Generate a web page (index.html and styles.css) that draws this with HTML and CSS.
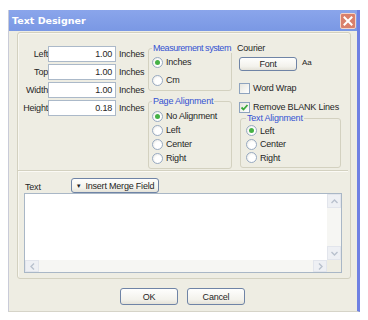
FILE: index.html
```html
<!DOCTYPE html>
<html>
<head>
<meta charset="utf-8">
<link rel="stylesheet" href="styles.css">
</head>
<body>
<div class="window">
  <div class="titlebar">
    <span class="title">Text Designer</span>
    <span class="close"><svg width="10" height="10" viewBox="0 0 10 10"><path d="M1.5 1.5 L8.5 8.5 M8.5 1.5 L1.5 8.5" stroke="#fff" stroke-width="2" stroke-linecap="square"/></svg></span>
  </div>
  <div class="client">
    <div class="panel">
      <div class="top">
        <div class="fields">
          <div class="row"><span class="lbl">Left</span><span class="input">1.00</span><span class="unit">Inches</span></div>
          <div class="row"><span class="lbl">Top</span><span class="input">1.00</span><span class="unit">Inches</span></div>
          <div class="row"><span class="lbl">Width</span><span class="input">1.00</span><span class="unit">Inches</span></div>
          <div class="row"><span class="lbl">Height</span><span class="input">0.18</span><span class="unit">Inches</span></div>
        </div>
        <div class="groups">
          <fieldset class="grp meas">
            <legend>Measurement system</legend>
            <div class="opt"><span class="radio on"></span>Inches</div>
            <div class="opt"><span class="radio"></span>Cm</div>
          </fieldset>
          <fieldset class="grp page">
            <legend>Page Alignment</legend>
            <div class="opt"><span class="radio on"></span>No Alignment</div>
            <div class="opt"><span class="radio"></span>Left</div>
            <div class="opt"><span class="radio"></span>Center</div>
            <div class="opt"><span class="radio"></span>Right</div>
          </fieldset>
        </div>
        <div class="right">
          <div class="courier">Courier</div>
          <div class="fontrow"><span class="btn fontbtn">Font</span><span class="aa">Aa</span></div>
          <div class="chk first"><span class="box"></span>Word Wrap</div>
          <div class="chk second"><span class="box"><svg width="9" height="9" viewBox="0 0 9 9"><path d="M1.5 4.5 L3.5 6.5 L7.5 2" fill="none" stroke="#3aa93a" stroke-width="1.8"/></svg></span>Remove BLANK Lines</div>
          <fieldset class="grp talign">
            <legend>Text Alignment</legend>
            <div class="opt"><span class="radio on"></span>Left</div>
            <div class="opt"><span class="radio"></span>Center</div>
            <div class="opt"><span class="radio"></span>Right</div>
          </fieldset>
        </div>
      </div>
      <div class="sep"></div>
      <div class="bottom">
        <div class="textbar">
          <span class="tlabel">Text</span>
          <span class="btn merge"><span class="tri">&#9660;</span>Insert Merge Field</span>
        </div>
        <div class="textarea">
          <div class="content"></div>
          <div class="vscroll">
            <span class="sbtn"><svg width="7" height="5" viewBox="0 0 7 5"><path d="M0.5 4 L3.5 1 L6.5 4" fill="none" stroke="#b9c1cd" stroke-width="1.4"/></svg></span>
            <span class="sbtn"><svg width="7" height="5" viewBox="0 0 7 5"><path d="M0.5 1 L3.5 4 L6.5 1" fill="none" stroke="#b9c1cd" stroke-width="1.4"/></svg></span>
          </div>
          <div class="hscroll">
            <span class="sbtn"><svg width="5" height="7" viewBox="0 0 5 7"><path d="M4 0.5 L1 3.5 L4 6.5" fill="none" stroke="#b9c1cd" stroke-width="1.4"/></svg></span>
            <span class="sbtn"><svg width="5" height="7" viewBox="0 0 5 7"><path d="M1 0.5 L4 3.5 L1 6.5" fill="none" stroke="#b9c1cd" stroke-width="1.4"/></svg></span>
          </div>
          <div class="corner"></div>
        </div>
      </div>
    </div>
    <div class="actions">
      <span class="btn action">OK</span>
      <span class="btn action">Cancel</span>
    </div>
  </div>
</div>
</body>
</html>
```
FILE: styles.css
```css
* { box-sizing: border-box; }
html, body { margin: 0; padding: 0; background: #ffffff; }
body {
  font-family: "Liberation Sans", Arial, sans-serif;
  font-size: 9px;
  letter-spacing: -0.2px;
  color: #262626;
}
.window {
  margin: 10px 0 0 8px;
  width: 352px;
  height: 302px;
  background: #eeede3;
  border-left: 1px solid #c9cbd8;
  border-right: 3px solid #6f81e2;
  border-bottom: 1px solid #d6d4c8;
  display: flex;
  flex-direction: column;
}
.titlebar {
  height: 21px;
  background: linear-gradient(#8aa5eb, #7a98e4);
  display: flex;
  align-items: center;
  justify-content: space-between;
  padding: 0 1px 0 3px;
}
.title {
  color: #ffffff;
  font-weight: bold;
  letter-spacing: 0;
  font-family: "DejaVu Sans", "Liberation Sans", sans-serif;
  font-size: 9.5px;
}
.close {
  width: 16px;
  height: 16px;
  background: #d9806c;
  border: 1px solid #f3d3c9;
  border-radius: 2px;
  display: flex;
  align-items: center;
  justify-content: center;
}
.client {
  flex: 1;
  padding: 1px 7px 0 8px;
  display: flex;
  flex-direction: column;
}
.panel {
  width: 334px;
  height: 247px;
  border: 1px solid #d3d1c0;
  border-radius: 3px;
  box-shadow: inset 1px 1px 0 #f8f7f1;
  display: flex;
  flex-direction: column;
}
.top {
  height: 137px;
  display: flex;
}
.fields {
  width: 130px;
  padding-top: 13px;
  display: flex;
  flex-direction: column;
  gap: 2px;
}
.row {
  height: 16px;
  display: flex;
  align-items: center;
}
.lbl {
  width: 30px;
  text-align: right;
}
.input {
  width: 68px;
  height: 16px;
  background: #ffffff;
  border: 1px solid #abb9c9;
  text-align: right;
  padding-right: 3px;
  line-height: 14px;
}
.unit {
  margin-left: 3px;
}
.groups {
  width: 84px;
  display: flex;
  flex-direction: column;
}
.grp {
  margin: 0;
  border: 1px solid #d3d1c0;
  border-radius: 3px;
  padding: 0 0 2px 3px;
  min-width: 0;
}
.grp legend {
  padding: 0 1px;
  color: #3452d2;
  line-height: 10px;
  height: 10px;
  white-space: nowrap;
}
.meas legend {
  letter-spacing: -0.45px;
}
.opt {
  height: 14px;
  display: flex;
  align-items: center;
  gap: 3px;
}
.radio {
  width: 11px;
  height: 11px;
  border-radius: 50%;
  border: 1px solid #98aac2;
  background: radial-gradient(circle at 60% 60%, #ffffff 40%, #e4e3dc 100%);
  display: flex;
  align-items: center;
  justify-content: center;
}
.radio.on::after {
  content: "";
  width: 5px;
  height: 5px;
  border-radius: 50%;
  background: #45b145;
}
.meas {
  margin-top: 10px;
  height: 48px;
  padding-top: 2px;
}
.meas .opt + .opt { margin-top: 4px; }
.page {
  margin-top: 5px;
  height: 73px;
  padding-top: 3px;
}
.right {
  margin-left: 5px;
  width: 104px;
  display: flex;
  flex-direction: column;
}
.courier {
  margin-top: 10px;
  line-height: 10px;
}
.fontrow {
  margin-top: 4px;
  display: flex;
  align-items: flex-start;
}
.btn {
  display: flex;
  align-items: center;
  justify-content: center;
  border: 1px solid #6f84a6;
  border-radius: 3px;
  background: linear-gradient(#fefefd, #f3f2ec 70%, #e4e2d8);
  color: #1f1f1f;
}
.fontbtn {
  margin-left: 2px;
  width: 58px;
  height: 14px;
}
.aa {
  margin-left: 5px;
  margin-top: 1px;
  font-size: 8px;
  letter-spacing: 0;
}
.chk {
  height: 12px;
  display: flex;
  align-items: center;
  gap: 3px;
  margin-left: 2px;
}
.chk.first { margin-top: 11px; }
.chk.second { margin-top: 7px; }
.box {
  width: 11px;
  height: 11px;
  border: 1px solid #8ea3be;
  background: linear-gradient(135deg, #e6e5de, #ffffff);
  display: flex;
  align-items: center;
  justify-content: center;
}
.talign {
  margin-left: 3px;
  width: 101px;
  height: 55px;
  padding: 1px 0 2px 5px;
}
.talign .opt { height: 13.5px; }
.sep {
  height: 2px;
  border-top: 1px solid #d3d1c0;
  border-bottom: 1px solid #fbfaf5;
  margin-right: 2px;
}
.bottom {
  flex: 1;
  padding: 6px 0 0 6px;
  display: flex;
  flex-direction: column;
}
.textbar {
  height: 15px;
  display: flex;
  align-items: center;
}
.tlabel {
  width: 47px;
  padding-left: 1px;
  margin-top: 2px;
}
.merge {
  width: 88px;
  height: 15px;
  gap: 4px;
}
.tri {
  font-size: 6px;
}
.textarea {
  width: 318px;
  height: 80px;
  border: 1px solid #a9b7c6;
  background: #ffffff;
  display: grid;
  grid-template-columns: 1fr 14px;
  grid-template-rows: 1fr 12px;
}
.vscroll {
  background: #f6f6f3;
  display: flex;
  flex-direction: column;
  justify-content: space-between;
}
.vscroll .sbtn { width: 14px; height: 14px; }
.hscroll {
  background: #f6f6f3;
  display: flex;
  justify-content: space-between;
}
.hscroll .sbtn { width: 14px; height: 12px; }
.sbtn {
  background: #eef0f4;
  border: 1px solid #e2e5ec;
  display: flex;
  align-items: center;
  justify-content: center;
}
.corner { background: #eeede3; }
.actions {
  margin-top: 9px;
  display: flex;
  justify-content: center;
  gap: 9px;
  padding-right: 2px;
}
.action {
  width: 58px;
  height: 17px;
}
```
